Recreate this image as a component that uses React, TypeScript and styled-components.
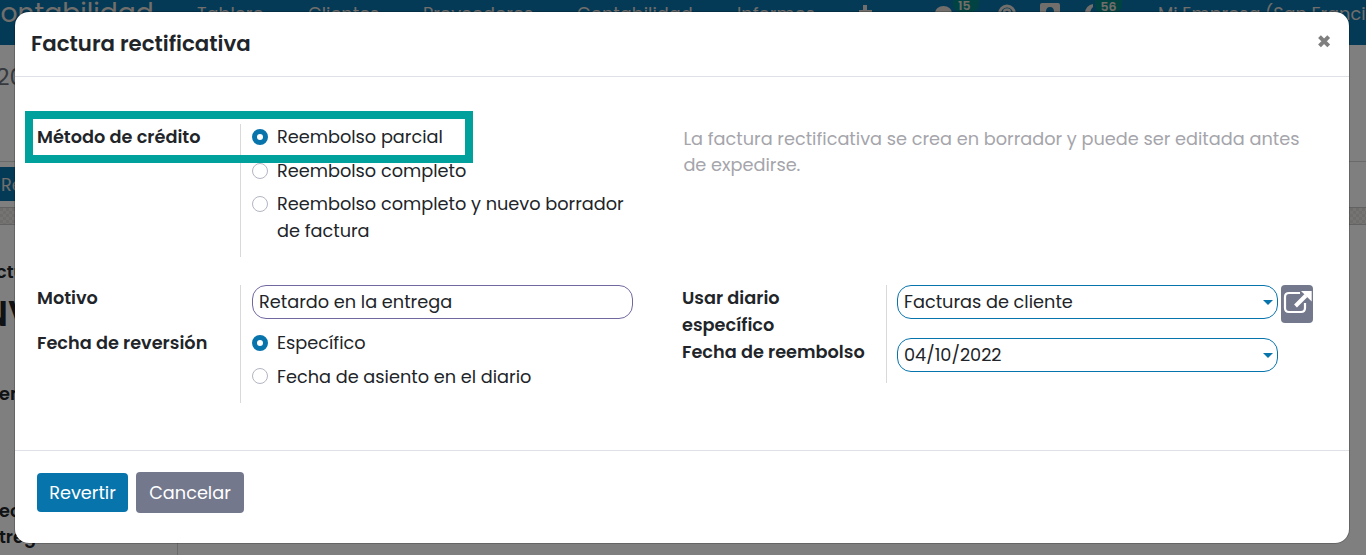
import React from "react";
import styled, { createGlobalStyle } from "styled-components";

const GlobalStyle = createGlobalStyle`
  * { box-sizing: border-box; }
  body { margin: 0; overflow: hidden; }
  button { font: inherit; }
`;

const Screen = styled.div`
  position: relative;
  height: 555px;
  overflow: hidden;
  background: #fff;
  color: #212529;
  font: 400 17.72px/26.6px Poppins, Inter, "Open Sans", sans-serif;
`;

const T = styled.span`
  white-space: nowrap;
`;

/* Page behind the dialog */
const Navbar = styled.nav`
  display: flex;
  height: 45px;
  background: #0874ac;
  color: #e2dcd6;
  white-space: nowrap;
  overflow: hidden;
`;
const Brand = styled.div`
  flex: none;
  width: 217px;
  margin-left: -20px;
  font-size: 26.6px;
  line-height: 25px;
`;
const NavItem = styled.div<{ $w: number }>`
  width: ${(p) => p.$w}px;
  flex: none;
  line-height: 27px;
`;
const NavIcons = styled.svg`
  flex: none;
  width: 299px;
  height: 45px;
`;
const Crumb = styled.div`
  height: 117px;
  padding-top: 19px;
  margin-left: -4px;
  font-size: 23.5px;
  color: #6c757d;
  border-bottom: 1px solid #d4d4d4;
`;
const StatusBar = styled.div`
  height: 45px;
  padding-top: 5px;
`;
const BackButton = styled.div`
  width: 120px;
  height: 34px;
  padding-left: 1px;
  line-height: 36px;
  background: #0874ac;
  color: #e2dcd6;
`;
const Strip = styled.div`
  height: 18px;
  border: solid #c4c4c4;
  border-width: 1px 0;
  background: repeating-conic-gradient(#ece9e6 0 25%, #dcdad8 0 50%) 0 0 / 6px 6px;
`;
const Sheet = styled.div`
  display: flex;
  flex-direction: column;
  padding-top: 34px;
  font-weight: 600;
  white-space: nowrap;
`;
const SheetLine = styled.div<{ $h: number; $x?: number; $big?: boolean }>`
  height: ${(p) => p.$h}px;
  margin-left: ${(p) => p.$x ?? 0}px;
  font-size: ${(p) => (p.$big ? 35.4 : 17.73)}px;
  line-height: ${(p) => (p.$big ? 56 : 26)}px;
`;
const SheetRow = styled.div`
  display: flex;
  width: 178px;
  height: 58px;
  border-right: 1px solid #d4d4d4;
`;
const Backdrop = styled.div`
  position: absolute;
  inset: 0;
  padding: 12px 17px 12px 15px;
  background: rgba(0, 0, 0, 0.5);
`;

/* Dialog */
const Dialog = styled.section`
  display: flex;
  flex-direction: column;
  height: 531px;
  background: #fff;
  border-radius: 14px;
  box-shadow: 0 0 0 1px rgba(0, 0, 0, 0.2);
`;
const Header = styled.header`
  display: flex;
  justify-content: space-between;
  height: 65px;
  padding: 16px 17px 0 16px;
  border-bottom: 1px solid #dee2e6;
`;
const Title = styled.h4`
  margin: 0;
  font-size: 21.3px;
  font-weight: 600;
  line-height: 32px;
`;
const Close = styled.svg`
  width: 15px;
  height: 15px;
  margin-top: 6px;
`;
const Body = styled.div`
  position: relative;
  flex: 1;
  display: flex;
  flex-direction: column;
  gap: 28px;
  padding: 47px 0 0 22px;
`;
const Row = styled.div`
  display: flex;
  align-items: flex-start;
`;
const Group = styled.div<{ $h: number; $w: number }>`
  display: grid;
  grid-template-columns: ${(p) => p.$w}px auto;
  height: ${(p) => p.$h}px;
`;
const Labels = styled.div`
  display: flex;
  flex-direction: column;
  border-right: 1px solid #d9d9dc;
  font-weight: 600;
`;
const Label = styled.div<{ $h: number }>`
  height: ${(p) => p.$h}px;
`;
const Fields = styled.div<{ $pad: number }>`
  display: flex;
  flex-direction: column;
  padding-left: ${(p) => p.$pad}px;
  width: 441px;
`;
const Options = styled.div<{ $top?: number }>`
  margin-top: ${(p) => p.$top ?? 0}px;
`;
const Option = styled.label<{ $h: number; $dot?: number }>`
  display: flex;
  gap: 9px;
  height: ${(p) => p.$h}px;

  > span:first-child {
    margin-top: ${(p) => p.$dot ?? 5}px;
  }
`;
const Dot = styled.span<{ $on?: boolean }>`
  flex: none;
  width: 16px;
  height: 16px;
  border-radius: 50%;
  border: ${(p) => (p.$on ? "5px solid #0874ac" : "1px solid #b3b5c3")};
  background: #fff;
`;
const Help = styled.p`
  margin: 2px 0 0;
  padding-left: 1.4px;
  line-height: 26px;
  color: #a5a5ab;
`;
const Box = styled.div<{ $color: string }>`
  display: flex;
  align-items: center;
  justify-content: space-between;
  width: 381px;
  height: 34px;
  padding: 1px 4px 0 6px;
  border: 1px solid ${(p) => p.$color};
  border-radius: 14px;
`;
const Caret = styled.span`
  border: solid transparent;
  border-width: 5px 5px 0;
  border-top-color: #0874ac;
`;
const Inline = styled.div`
  display: flex;
  gap: 3px;
  height: 53px;
`;
const OpenButton = styled.button`
  width: 32px;
  height: 38px;
  padding: 0;
  border: 0;
  border-radius: 4px;
  background: #74788d;
`;
const Footer = styled.footer`
  display: flex;
  align-items: center;
  gap: 8px;
  height: 93px;
  padding: 0 22px 9px;
  border-top: 1px solid #dee2e6;
`;
const Button = styled.button<{ $primary?: boolean }>`
  width: ${(p) => (p.$primary ? 91 : 108)}px;
  height: ${(p) => (p.$primary ? 39 : 41)}px;
  padding: 2px 0 0;
  border: 0;
  border-radius: 4px;
  color: #fff;
  background: ${(p) => (p.$primary ? "#0874ac" : "#74788d")};
`;
const Highlight = styled.div`
  position: absolute;
  left: 10px;
  top: 34px;
  width: 448px;
  height: 52px;
  border: 8px solid #00a09d;
`;

export default function App() {
  return (
    <>
      <GlobalStyle />
      <Screen>
        <Navbar>
          <Brand>Contabilidad</Brand>
          <NavItem $w={111}>Tablero</NavItem>
          <NavItem $w={115}>Clientes</NavItem>
          <NavItem $w={154}>Proveedores</NavItem>
          <NavItem $w={160}>Contabilidad</NavItem>
          <NavItem $w={122}>Informes</NavItem>
          <NavIcons viewBox="859 0 299 45" fill="#e2dcd6">
            <path d="M863 5h4v5h5v4h-5v5h-4v-5h-5v-4h5z" />
            <ellipse cx="943.500" cy="13" rx="8.500" ry="7" />
            <rect x="953" y="-9" width="26" height="21" rx="8" fill="#008784" />
            <circle cx="1007" cy="13.500" r="7.500" fill="none" stroke="#e2dcd6" strokeWidth="3" />
            <path d="M1004 12.500q0-3 3-3t3 3" fill="none" stroke="#e2dcd6" strokeWidth="2.500" />
            <path d="M1042 3h16q2 0 2 2v15h-20V5q0-2 2-2zm8 4q-4 0-4 5h8q0-5-4-5z" fillRule="evenodd" />
            <path d="M1093 4a9 9 0 0 0-8 9q0 6 6 8-3-10 2-14z" />
            <rect x="1095" y="-8" width="27" height="21" rx="8" fill="#008784" />
            <text x="958" y="10" fontSize="12.500" fontWeight="600">15</text>
            <text x="1100.500" y="11" fontSize="12.500" fontWeight="600">56</text>
          </NavIcons>
          <NavItem $w={230}>Mi Empresa (San Francisco)</NavItem>
        </Navbar>
        <Crumb>2022</Crumb>
        <StatusBar><BackButton>Rectificar</BackButton></StatusBar>
        <Strip />
        <Sheet>
          <SheetLine $h={27} $x={-4}>ctura</SheetLine>
          <SheetLine $h={95} $x={-18} $big>NV</SheetLine>
          <SheetLine $h={117} $x={-1}>ente</SheetLine>
          <SheetRow>
            <SheetLine $h={54} $x={-1}>echa de<br />trega</SheetLine>
          </SheetRow>
        </Sheet>
        <Backdrop>
          <Dialog>
            <Header>
              <Title><T>Factura rectificativa</T></Title>
              <Close viewBox="0 0 15 15"><path d="M2.500 2.700l9.200 9.200M11.700 2.700l-9.200 9.200" stroke="#7f7f7f" strokeWidth="4" /></Close>
            </Header>
            <Body>
              <Row>
                <Group $h={133} $w={204}>
                  <Labels><Label $h={27}><T>Método de crédito</T></Label></Labels>
                  <Fields $pad={11}>
                    <Options>
                      <Option $h={34}><Dot $on /><T>Reembolso parcial</T></Option>
                      <Option $h={33}><Dot /><T>Reembolso completo</T></Option>
                      <Option $h={54}><Dot /><T>Reembolso completo y nuevo borrador<br />de factura</T></Option>
                    </Options>
                  </Fields>
                </Group>
                <Help>
                  <T>La factura rectificativa se crea en borrador y puede ser editada antes</T><br />
                  <T>de expedirse.</T>
                </Help>
              </Row>
              <Row>
                <Group $h={118} $w={204}>
                  <Labels>
                    <Label $h={45}><T>Motivo</T></Label>
                    <Label $h={27}><T>Fecha de reversión</T></Label>
                  </Labels>
                  <Fields $pad={11}>
                    <Box $color="#7168a0"><T>Retardo en la entrega</T></Box>
                    <Options $top={11}>
                      <Option $h={34}><Dot $on /><T>Específico</T></Option>
                      <Option $h={27} $dot={4}><Dot /><T>Fecha de asiento en el diario</T></Option>
                    </Options>
                  </Fields>
                </Group>
                <Group $h={98} $w={205}>
                  <Labels>
                    <Label $h={54}><T>Usar diario<br />específico</T></Label>
                    <Label $h={27}><T>Fecha de reembolso</T></Label>
                  </Labels>
                  <Fields $pad={10}>
                    <Inline>
                      <Box $color="#0874ac"><T>Facturas de cliente</T><Caret /></Box>
                      <OpenButton aria-label="Abrir">
                        <svg width="32" height="38" viewBox="0 0 32 38" fill="none" stroke="#fff" strokeWidth="2.200">
                          <path d="M19 8H8q-4 0-4 4v11q0 4 4 4h12q4 0 4-4v-5" />
                          <path d="M14.500 21L25 10.500" strokeWidth="4" />
                          <path d="M20 6h10.700v10.500z" fill="#fff" stroke="none" />
                        </svg>
                      </OpenButton>
                    </Inline>
                    <Box $color="#0874ac"><T>04/10/2022</T><Caret /></Box>
                  </Fields>
                </Group>
              </Row>
              <Highlight />
            </Body>
            <Footer>
              <Button $primary><T>Revertir</T></Button>
              <Button><T>Cancelar</T></Button>
            </Footer>
          </Dialog>
        </Backdrop>
      </Screen>
    </>
  );
}
